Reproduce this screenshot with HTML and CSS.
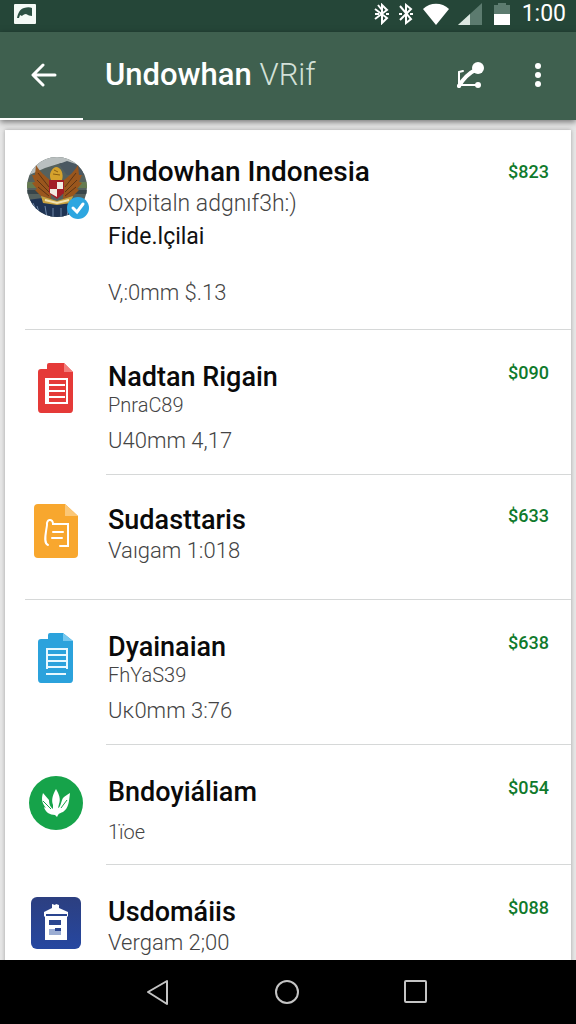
FILE: index.html
```html
<!DOCTYPE html>
<html lang="id">
<head>
    <meta charset="UTF-8">
    <meta name="viewport" content="width=device-width, initial-scale=1.0">
    <title>Undowhan</title>
    <link rel="stylesheet" href="styles.css">
</head>
<body>

<!-- Status bar -->
<div class="status-bar">
    <svg class="status-picture" width="22" height="20" viewBox="0 0 22 20">
        <rect width="22" height="20" rx="1" fill="#f4faf6"/>
        <path d="M3 14c1-5 3-9 7-10 3-1 6-1 8 0v8c-2 0-4-1-6-2-2 0-3 1-4 2l-2-1-1 3z" fill="#2c5143"/>
    </svg>
    <div class="status-icons">
        <svg width="16" height="22" viewBox="0 0 16 22" fill="none" stroke="#fff" stroke-width="2">
            <path d="M1 6l12 9-5 5V2l5 5-12 9M1 11h4M12 11h3M4 2l4 5"/>
        </svg>
        <svg width="16" height="22" viewBox="0 0 16 22" fill="none" stroke="#fff" stroke-width="2">
            <path d="M2 3l11 13-5 4V2l5 4L2 17M1 11h3M12 11h3"/>
        </svg>
        <svg width="28" height="22" viewBox="0 0 28 22">
            <path d="M1 6C8-1 20-1 27 6L14 22z" fill="#fff"/>
        </svg>
        <svg width="24" height="22" viewBox="0 0 24 22">
            <path d="M24 0v22H0z" fill="#5c7b6f"/>
            <path d="M12 11v11H0z" fill="#dce8e1"/>
        </svg>
        <svg class="battery" width="16" height="22" viewBox="0 0 16 22">
            <path d="M4 0h8v2h4v9H0V2h4z" fill="#5c7b6f"/>
            <path d="M0 11h16v11H0z" fill="#fff"/>
        </svg>
    </div>
    <span class="clock">1:00</span>
</div>

<!-- App bar -->
<header class="app-bar">
    <button class="icon-button" aria-label="Kembali">
        <svg width="26" height="24" viewBox="0 0 26 24" fill="none" stroke="#fff" stroke-width="3" stroke-linecap="round" stroke-linejoin="round">
            <path d="M24 12H3M12 2L2 12l10 10"/>
        </svg>
    </button>
    <h1 class="app-title">Undowhan <span class="app-subtitle">VRif</span></h1>
    <button class="icon-button" aria-label="Bagikan">
        <svg width="28" height="28" viewBox="0 0 28 28" fill="none" stroke="#fff" stroke-width="2" stroke-linecap="round">
            <path d="M3 24V11l4-1M3 24h18"/>
            <path d="M3 25C7 18 13 12 21 8" stroke-width="4"/>
            <circle cx="22" cy="7" r="6" fill="#fff" stroke="none"/>
            <circle cx="22" cy="24" r="3" fill="#fff" stroke="none"/>
            <circle cx="3" cy="25" r="2" fill="#fff" stroke="none"/>
        </svg>
    </button>
    <button class="icon-button" aria-label="Menu">
        <svg width="8" height="26" viewBox="0 0 8 26" fill="#fff">
            <circle cx="4" cy="4" r="3"/>
            <circle cx="4" cy="13" r="3"/>
            <circle cx="4" cy="22" r="3"/>
        </svg>
    </button>
    <div class="tab-indicator"></div>
</header>

<!-- List -->
<main class="content">
    <ul class="list">
        <li class="item item-featured item-wide-line">
            <div class="item-icon">
                <svg width="66" height="64" viewBox="-4 0 66 64">
                    <defs>
                        <clipPath id="avatar"><circle cx="30" cy="31" r="30"/></clipPath>
                    </defs>
                    <g clip-path="url(#avatar)">
                        <rect width="62" height="64" fill="#55615e"/>
                        <path d="M0 0h62v16L46 9 34 7 18 12 0 20z" fill="#b9bfbf"/>
                        <path d="M32 8l8-3 18 6v8H40z" fill="#4b5861"/>
                        <path d="M0 26h62v6H0z" fill="#657b50"/>
                        <path d="M0 34h62v4H0z" fill="#38454a"/>
                        <path d="M0 44l16-2 14 4 16-4 16 2v20H0z" fill="#1f3353"/>
                        <path d="M10 50l4 12M18 50l2 12M26 52v10M34 52v10M42 50l-2 10M6 47l3 7" stroke="#7088a8" stroke-width="1"/>
                        <path d="M9 9c4 7 9 11 14 15l1 19-10-3-6-6 2-1-5-6 3-1-3-7 3 0zM51 9c-4 7-9 11-14 15l-1 19 10-3 6-6-2-1 5-6-3-1 3-7-3 0z" fill="#9a561d"/>
                        <path d="M11 17l11 14M10 24l12 12M11 31l11 9M49 17L38 31M50 24L38 36M49 31l-11 9" stroke="#5d3415" stroke-width="1"/>
                        <path d="M24 24c-3-6 1-12 5-13 5 0 8 7 6 13z" fill="#d5a22c"/>
                        <path d="M27 14l4 2M26 18l7 1" stroke="#8a5f14" stroke-width="1"/>
                        <path d="M22 24h15v13l-7 6-8-6z" fill="#a31d27"/>
                        <path d="M30 26h6v7h-6zM23 33h7v8l-7-4z" fill="#f1ebe2"/>
                        <path d="M14 40l16 5 16-5-2 7-14 2-14-2z" fill="#c9a23f"/>
                        <path d="M18 44l12 3 12-3" stroke="#f1e2b0" stroke-width="2" fill="none"/>
                    </g>
                    <circle cx="51" cy="52" r="11" fill="#2da6e0"/>
                    <path d="M46 52l4 4 6-8" fill="none" stroke="#fff" stroke-width="3" stroke-linecap="round"/>
                </svg>
            </div>
            <div class="item-text">
                <h2>Undowhan Indonesia</h2>
                <p class="subtitle">Oxpitaln adgnıf3h:)</p>
                <p class="label">Fide.lçilai</p>
                <p class="meta">V,:0mm $.13</p>
            </div>
            <span class="price">$823</span>
        </li>
        <li class="item">
            <div class="item-icon">
                <svg width="36" height="50" viewBox="0 0 36 50">
                    <path d="M3 6h6V2q0-2 2-2h15l9 9v37q0 4-3 4H3q-3 0-3-4V9q0-3 3-3z" fill="#e53a38"/>
                    <path d="M26 0l9 9h-9z" fill="#f37e7b"/>
                    <path d="M8 16h21v24H8zM11 22h16M11 28h16M11 34h16M10 16v24" fill="none" stroke="#fff" stroke-width="2"/>
                </svg>
            </div>
            <div class="item-text">
                <h2>Nadtan Rigain</h2>
                <p class="detail">PnraC89</p>
                <p class="meta">U40mm 4,17</p>
            </div>
            <span class="price">$090</span>
        </li>
        <li class="item item-short item-wide-line">
            <div class="item-icon">
                <svg width="44" height="54" viewBox="0 0 44 54">
                    <path d="M4 0h27l13 12v38q0 4-4 4H4q-4 0-4-4V4q0-4 4-4z" fill="#f8a72e"/>
                    <path d="M31 0l13 12H31z" fill="#fbc777"/>
                    <path d="M14 41c-5-2-2-12-1-20-1-6 6-7 6-1h15v22h-8M19 28h10M18 34h10" fill="none" stroke="#fff" stroke-width="2" stroke-linecap="round"/>
                </svg>
            </div>
            <div class="item-text">
                <h2>Sudasttaris</h2>
                <p class="meta">Vaıgam 1:018</p>
            </div>
            <span class="price">$633</span>
        </li>
        <li class="item">
            <div class="item-icon">
                <svg width="36" height="50" viewBox="0 0 36 50">
                    <path d="M3 6h7V2q0-2 2-2h13l10 8v38q0 4-3 4H3q-3 0-3-4V9q0-3 3-3z" fill="#2ba2dc"/>
                    <path d="M25 0l10 8H25z" fill="#75c8ef"/>
                    <path d="M8 16h22M9 22h20M9 28h20M9 34h20M8 41h20M9 16v20M29 16v20" fill="none" stroke="#e8f8ff" stroke-width="2"/>
                </svg>
            </div>
            <div class="item-text">
                <h2>Dyainaian</h2>
                <p class="detail">FhYaS39</p>
                <p class="meta">Uĸ0mm 3:76</p>
            </div>
            <span class="price">$638</span>
        </li>
        <li class="item">
            <div class="item-icon">
                <svg width="54" height="54" viewBox="0 0 54 54">
                    <circle cx="27" cy="27" r="27" fill="#16a34a"/>
                    <path d="M27 13c3 5 5 10 3 15l-1 4c3-1 3-7 5-10 2-2 5-4 7-5-1 8-1 15-7 19-2 1-4 1-5 3l-1 2-2-2c-5 0-10-3-11-8l2 1c-4-5-5-9-3-15l6 7c0 4 1 7 4 9v-4c-2-5 0-11 3-16z" fill="#fff"/>
                    <path d="M14 25l8 8M38 24l-6 8" stroke="#16a34a" stroke-width="1"/>
                </svg>
            </div>
            <div class="item-text">
                <h2>Bndoyiáliam</h2>
                <p class="note">1ïoe</p>
            </div>
            <span class="price">$054</span>
        </li>
        <li class="item">
            <div class="item-icon">
                <svg width="50" height="52" viewBox="0 0 50 52">
                    <defs>
                        <linearGradient id="blue" x1="0" y1="0" x2="0" y2="1">
                            <stop offset="0" stop-color="#2c3f80"/>
                            <stop offset="1" stop-color="#2647a0"/>
                        </linearGradient>
                    </defs>
                    <rect width="50" height="52" rx="6" fill="url(#blue)"/>
                    <path d="M13 15l8-4V7l3 1 1-1 3 1v3l9 4v4l-1 1v23H14V20l-1-1z" fill="#fff"/>
                    <path d="M15 17h21v2H15zM18 23h12v5H18z" fill="#2a458f"/>
                    <path d="M18 32h12v6H18z" fill="#9badd3"/>
                    <path d="M24 31h6v3h-6z" fill="#2a458f"/>
                </svg>
            </div>
            <div class="item-text">
                <h2>Usdomáiis</h2>
                <p class="meta">Vergam 2;00</p>
            </div>
            <span class="price">$088</span>
        </li>
    </ul>
</main>

<!-- System navigation -->
<nav class="nav-bar">
    <button class="nav-button" aria-label="Back">
        <svg width="26" height="28" viewBox="0 0 26 28" fill="none" stroke="#c4c4c4" stroke-width="2" stroke-linejoin="round">
            <path d="M20 3v23L1 14z"/>
        </svg>
    </button>
    <button class="nav-button" aria-label="Home">
        <svg width="26" height="26" viewBox="0 0 26 26" fill="none" stroke="#c4c4c4" stroke-width="2">
            <circle cx="12" cy="13" r="11"/>
        </svg>
    </button>
    <button class="nav-button" aria-label="Recent">
        <svg width="26" height="26" viewBox="0 0 26 26" fill="none" stroke="#c4c4c4" stroke-width="2">
            <rect x="2" y="2" width="21" height="21" rx="1"/>
        </svg>
    </button>
</nav>

</body>
</html>
```
FILE: styles.css
```css
* {
    box-sizing: border-box;
}

body {
    display: flex;
    flex-direction: column;
    height: 100vh;
    margin: 0;
    font-family: Roboto, sans-serif;
    background-color: #e6e6e6;
}

h1, h2, p, ul {
    margin: 0;
    padding: 0;
}

button {
    padding: 0;
    border: none;
    background: none;
    cursor: pointer;
}

svg {
    display: block;
    flex-shrink: 0;
}

/* Status bar */
.status-bar {
    display: flex;
    flex-shrink: 0;
    align-items: center;
    height: 32px;
    padding: 0 10px 4px 14px;
    background-color: #254638;
    color: #fff;
}

.status-icons {
    display: flex;
    gap: 8px;
    margin-left: auto;
}

.battery {
    margin-left: 4px;
}

.clock {
    margin-left: 12px;
    font-size: 23px;
    line-height: 28px;
}

/* App bar */
.app-bar {
    position: relative;
    display: flex;
    flex-shrink: 0;
    align-items: center;
    height: 88px;
    padding: 0 18px 2px 24px;
    background-color: #3f604f;
    box-shadow: 0 2px 6px rgba(0, 0, 0, 0.5);
    color: #fff;
}

.icon-button {
    display: flex;
    align-items: center;
    justify-content: center;
    width: 40px;
    height: 48px;
}

.icon-button + .icon-button {
    margin-left: 28px;
}

.app-title {
    flex: 1;
    margin-left: 41px;
    font-size: 31px;
    font-weight: 500;
    line-height: 36px;
}

.app-subtitle {
    font-weight: 300;
    color: #d3e0d8;
}

.tab-indicator {
    position: absolute;
    bottom: 0;
    left: 0;
    width: 83px;
    height: 2px;
    background-color: #fff;
}

/* List */
.content {
    flex: 1;
    min-height: 0;
    padding: 10px 5px 0;
    overflow: hidden;
}

.list {
    min-height: 100%;
    list-style: none;
    background-color: #fff;
    box-shadow: 0 0 4px rgba(0, 0, 0, 0.3);
}

.item {
    position: relative;
    display: flex;
    align-items: flex-start;
    padding: 31px 22px 19px 20px;
}

.item-featured {
    padding-top: 26px;
    padding-bottom: 22px;
}

.item-short {
    padding-top: 29px;
    padding-bottom: 34px;
}

/* Divider, starts at the text column */
.item::after {
    content: "";
    position: absolute;
    right: 0;
    bottom: 0;
    left: 101px;
    height: 1px;
    background-color: #d6d8d8;
}

.item-wide-line::after {
    left: 20px;
}

.item:last-child::after {
    display: none;
}

.item-icon {
    display: flex;
    flex-shrink: 0;
    align-items: center;
    justify-content: center;
    width: 62px;
    height: 54px;
    margin-right: 21px;
}

.item-featured .item-icon {
    height: 64px;
}

.item-text {
    flex: 1;
    color: #444;
}

.item-text h2 {
    font-size: 27px;
    font-weight: 500;
    line-height: 32px;
    color: #0a0a0a;
}

.item-featured h2 {
    font-size: 28px;
}

.subtitle {
    font-size: 23px;
    font-weight: 300;
    line-height: 32px;
}

.label {
    font-size: 23px;
    line-height: 34px;
    color: #111;
}

.detail {
    font-size: 20px;
    font-weight: 300;
    line-height: 24px;
}

.meta {
    font-size: 22px;
    font-weight: 300;
    line-height: 30px;
}

.detail + .meta {
    margin-top: 9px;
}

.label + .meta {
    margin-top: 24px;
}

.note {
    margin-top: 10px;
    font-size: 20px;
    font-weight: 300;
    line-height: 28px;
}

.price {
    font-size: 18px;
    font-weight: 500;
    line-height: 24px;
    color: #0f7a2c;
}

.item-featured .price {
    line-height: 32px;
}

/* System navigation */
.nav-bar {
    display: flex;
    flex-shrink: 0;
    align-items: center;
    justify-content: center;
    gap: 80px;
    height: 64px;
    background-color: #000;
}

.nav-button {
    display: flex;
    align-items: center;
    justify-content: center;
    width: 48px;
    height: 48px;
}
```
